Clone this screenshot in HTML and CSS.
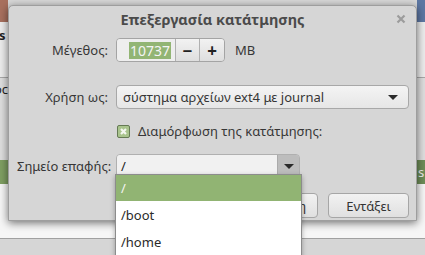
FILE: index.html
```html
<!DOCTYPE html>
<html lang="el">

<head>
    <meta charset="UTF-8">
    <meta name="viewport" content="width=device-width, initial-scale=1.0">

    <title>Επεξεργασία κατάτμησης</title>

    <link rel="stylesheet" href="styles.css">
</head>

<body>
    <!-- παράθυρο εγκατάστασης πίσω από τον διάλογο -->
    <div class="app">
        <div class="app-top"></div>
        <div class="app-row app-row-fs"><span class="app-text bold">fs</span></div>
        <div class="app-row app-row-oc"><span class="app-text">oc</span></div>
        <div class="app-row app-row-green"><span class="app-text app-text-right">s</span></div>
        <div class="app-row app-row-white"></div>
        <div class="app-row app-row-bottom"></div>
    </div>

    <div class="dialog">
        <div class="titlebar">
            <h1 class="title">Επεξεργασία κατάτμησης</h1>
            <svg class="close" width="10" height="10" viewBox="0 0 10 10">
                <path d="M1.5 1.5 L8.5 8.5 M8.5 1.5 L1.5 8.5" stroke="#9c9c9c" stroke-width="2.2" />
            </svg>
        </div>

        <div class="form">
            <div class="row row-size">
                <label class="label">Μέγεθος:</label>
                <div class="spin">
                    <div class="spin-entry"><span class="selected">10737</span></div>
                    <button class="spin-btn">−</button>
                    <button class="spin-btn">+</button>
                </div>
                <span class="unit">MB</span>
            </div>

            <div class="row row-use">
                <label class="label">Χρήση ως:</label>
                <div class="combo">
                    <span>σύστημα αρχείων ext4 με journal</span>
                    <span class="arrow"></span>
                </div>
            </div>

            <div class="row row-format">
                <div class="spacer"></div>
                <svg class="check" width="13" height="13" viewBox="0 0 13 13">
                    <rect x="0.5" y="0.5" width="12" height="12" rx="1.5" fill="#a9c48d" stroke="#657a54" />
                    <path d="M4 4 L9 9 M9 4 L4 9" stroke="#f4f7f0" stroke-width="2.2" />
                </svg>
                <span class="check-label">Διαμόρφωση της κατάτμησης:</span>
            </div>

            <div class="row row-mount">
                <label class="label">Σημείο επαφής:</label>
                <div class="combo-entry">
                    <div class="entry">/</div>
                    <div class="entry-btn"><span class="arrow"></span></div>
                </div>
            </div>

            <div class="buttons">
                <button class="btn">Ακύρωση</button>
                <button class="btn">Εντάξει</button>
            </div>
        </div>
    </div>

    <!-- αναδυόμενη λίστα του σημείου επαφής -->
    <ul class="popup">
        <li class="item item-active">/</li>
        <li class="item">/boot</li>
        <li class="item">/home</li>
    </ul>
</body>

</html>
```

FILE: styles.css
```css
* {
    margin: 0;
    padding: 0;
    box-sizing: border-box;
}

body {
    width: 425px;
    height: 255px;
    overflow: hidden;
    position: relative;

    font-family: "Noto Sans", "DejaVu Sans", sans-serif;
    font-size: 13px;
    color: #363636;
}

/* φόντο */

.app {
    display: flex;
    flex-direction: column;
    height: 255px;
    background: #e2e2e2;
}

.app-top {
    height: 22px;
    background: linear-gradient(to right, #a8705e 0 8px, #d8d8d8 8px 417px, #5d77a3 417px);
}

.app-row {
    display: flex;
    align-items: center;
}

.app-row-fs {
    height: 56px;
    align-items: flex-start;
    padding-top: 4px;
    background: #ececec;
    border-bottom: 1px solid #a8a8a8;
}

.app-row-oc {
    height: 82px;
    background: #dedede;
    align-items: flex-start;
    padding-top: 2px;
}

.app-row-green {
    height: 24px;
    background: linear-gradient(to right, #7f9f62 0 8px, #e0e0e0 8px 417px, #6e8d58 417px);
}

.app-row-white {
    height: 55px;
    background: #f6f6f6;
    border-bottom: 1px solid #a0a0a0;
}

.app-row-bottom {
    flex: 1;
    background: #d6d6d6;
}

.app-text {
    margin-left: -6px;
    color: #222;
}

.app-text-right {
    margin-left: 418px;
    color: #eee;
}

.bold {
    font-weight: bold;
}

/* διάλογος */

.dialog {
    position: absolute;
    left: 8px;
    top: 5px;
    width: 409px;
    height: 216px;

    background: #d6d6d6;
    border: 1px solid #9e9e9e;
    border-radius: 5px 5px 0 0;
    box-shadow: 0 2px 8px rgba(0, 0, 0, 0.55);
}

.titlebar {
    height: 26px;
    display: flex;
    align-items: center;
    justify-content: center;
    position: relative;
}

.title {
    font-size: 14.5px;
    font-weight: bold;
    color: #4b4b4b;
}

.close {
    position: absolute;
    right: 10px;
    top: 8px;
}

.form {
    display: flex;
    flex-direction: column;
    padding: 6px 7px 0 8px;
}

.row {
    display: flex;
    align-items: center;
    gap: 8px;
}

.label,
.spacer {
    width: 91px;
    text-align: right;
    white-space: nowrap;
}

.row-use {
    margin-top: 23px;
}

.row-format {
    margin-top: 13px;
    gap: 0;
}

.row-format .spacer {
    width: 100px;
}

.row-mount {
    margin-top: 14px;
}

/* αριθμός */

.spin {
    display: flex;
    height: 24px;
    border: 1px solid #a4a4a4;
    border-radius: 4px;
    overflow: hidden;
}

.spin-entry {
    width: 59px;
    display: flex;
    align-items: center;
    justify-content: flex-end;
    padding-right: 4px;
    background: #eeeeee;
    border-right: 1px solid #b0b0b0;
}

.selected {
    background: #92b574;
    color: #f4f4f4;
    font-size: 14px;
    line-height: 17px;
    padding: 0 1px;
}

.spin-btn {
    width: 24px;
    border: none;
    border-right: 1px solid #b0b0b0;
    background: linear-gradient(#f2f2f2, #dedede);
    font-family: inherit;
    font-size: 17px;
    font-weight: bold;
    color: #222;
}

.spin-btn:last-child {
    border-right: none;
}

.unit {
    margin-left: 2px;
}

/* λίστες επιλογής */

.combo {
    flex: 1;
    height: 24px;
    display: flex;
    align-items: center;
    justify-content: space-between;
    padding: 0 10px 0 6px;

    background: linear-gradient(#f4f4f4, #e6e6e6);
    border: 1px solid #a8a8a8;
    border-radius: 4px;
}

.arrow {
    width: 0;
    height: 0;
    border-left: 5px solid transparent;
    border-right: 5px solid transparent;
    border-top: 5px solid #2a2a2a;
}

.check {
    margin-right: 8px;
}

.combo-entry {
    display: flex;
    width: 184px;
    height: 24px;
    border: 1px solid #b0b0b0;
    border-radius: 4px;
    overflow: hidden;
}

.entry {
    flex: 1;
    display: flex;
    align-items: center;
    padding-left: 4px;
    background: #f1f1f1;
    color: #222;
}

.entry-btn {
    width: 22px;
    display: flex;
    align-items: center;
    justify-content: center;
    background: #bdbdbd;
    border-left: 1px solid #ababab;
}

/* κουμπιά */

.buttons {
    display: flex;
    justify-content: flex-end;
    gap: 10px;
    margin-top: 15px;
}

.btn {
    width: 81px;
    height: 25px;
    font-family: inherit;
    font-size: 13px;
    color: #333;
    background: linear-gradient(#f2f2f2, #e0e0e0);
    border: 1px solid #a6a6a6;
    border-radius: 4px;
}

/* αναδυόμενη λίστα */

.popup {
    position: absolute;
    left: 115px;
    top: 174px;
    width: 187px;
    height: 90px;

    list-style: none;
    background: #ffffff;
    border: 1px solid #8c8c8c;
    box-shadow: 0 2px 5px rgba(0, 0, 0, 0.3);
}

.item {
    height: 27px;
    display: flex;
    align-items: center;
    padding-left: 5px;
    color: #2a2a2a;
}

.item-active {
    height: 26px;
    background: #91b473;
    color: #f4f4f4;
}
```
